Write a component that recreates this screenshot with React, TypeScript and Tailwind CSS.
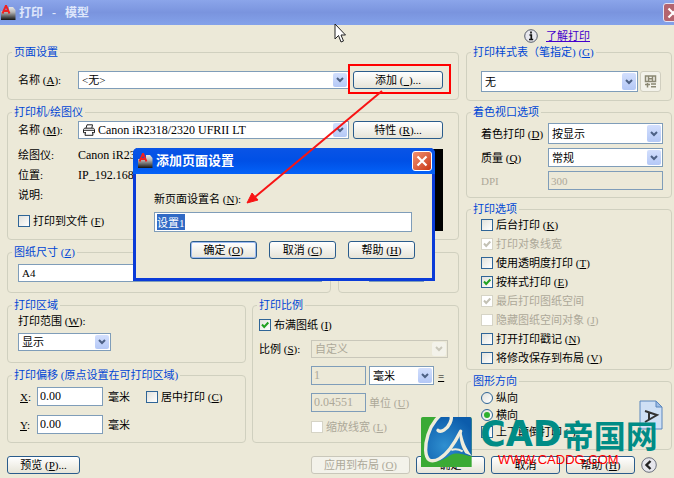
import React, { useEffect, useRef } from 'react';
import clsx from 'clsx';

type Children = { children?: React.ReactNode };

function Group({ title, className, bodyClassName, children }: Children & { title?: React.ReactNode; className?: string; bodyClassName?: string }) {
  return (
    <fieldset className={clsx('min-w-0 rounded-[4px] border border-[#d0d0bf]', className)}>
      <legend className="ml-1 h-3 px-0.5 text-[#0046d5] whitespace-nowrap">{title}</legend>
      <div className={bodyClassName}>{children}</div>
    </fieldset>
  );
}

function Select({ id, value, label, className, selectClassName, disabled, icon }: {
  id?: string;
  value: string;
  label?: string;
  className?: string;
  selectClassName?: string;
  disabled?: boolean;
  icon?: React.ReactNode;
}) {
  return (
    <div className={clsx('relative', className)}>
      <select
        id={id}
        aria-label={label}
        disabled={disabled}
        className={clsx(
          'block h-full w-full appearance-none border pr-5 outline-none',
          disabled ? 'border-[#c9c7ba] bg-[#ece9d8] text-[#aca899] opacity-100' : 'border-[#7f9db9] bg-white text-black',
          selectClassName ?? 'pl-[3px]'
        )}
      >
        <option>{value}</option>
      </select>
      {icon}
      <span
        className={clsx(
          'pointer-events-none absolute inset-y-0.5 right-0.5 flex w-3.5 items-center justify-center rounded-[2px]',
          disabled ? 'bg-[#f3f2ea]' : 'bg-gradient-to-b from-[#d3dffd] to-[#b4c8f6]'
        )}
      >
        <svg width="8" height="6" viewBox="0 0 8 6" fill="none">
          <path d="M1 1l3 3 3-3" stroke={disabled ? '#c9c7ba' : '#4d6185'} strokeWidth="2" />
        </svg>
      </span>
    </div>
  );
}

function Button({ children, className, disabled, isDefault }: Children & { className?: string; disabled?: boolean; isDefault?: boolean }) {
  return (
    <button
      type="button"
      disabled={disabled}
      className={clsx(
        'h-[18px] shrink-0 rounded-[3px] border text-center whitespace-nowrap',
        disabled ? 'border-[#c9c7ba] bg-[#f3f2ea] text-[#aca899]' : 'border-[#2a5c8c] bg-gradient-to-b from-white to-[#e6e4d8] text-black',
        isDefault && 'shadow-[inset_0_0_0_1px_#9ebbf0]',
        className
      )}
    >
      {children}
    </button>
  );
}

function Check({ children, checked, disabled, className }: Children & { checked?: boolean; disabled?: boolean; className?: string }) {
  return (
    <label className={clsx('flex items-center gap-[3px] whitespace-nowrap', disabled ? 'text-[#aca899]' : 'text-black', className)}>
      <span className="relative block h-3 w-3 shrink-0">
        <input
          type="checkbox"
          defaultChecked={checked}
          disabled={disabled}
          className={clsx(
            'peer block h-3 w-3 appearance-none border',
            disabled ? 'border-[#d6d4c6] bg-white' : 'border-[#2f6597] bg-gradient-to-br from-[#e2e2dc] to-white'
          )}
        />
        <svg className="pointer-events-none absolute inset-0 hidden peer-checked:block" width="12" height="12" viewBox="0 0 12 12" fill="none">
          <path d="M3 5.5l2.2 2.5L9.3 3.5" stroke={disabled ? '#c3c1b4' : '#21a121'} strokeWidth="2" />
        </svg>
      </span>
      <span>{children}</span>
    </label>
  );
}

function Radio({ children, checked }: Children & { checked?: boolean }) {
  return (
    <label className="flex h-[17px] items-center gap-[3px]">
      <span className="relative block h-3 w-3 shrink-0">
        <input
          type="radio"
          name="orientation"
          defaultChecked={checked}
          className="peer block h-3 w-3 appearance-none rounded-full border border-[#2f6597] bg-gradient-to-br from-[#e2e2dc] to-white"
        />
        <span className="pointer-events-none absolute inset-[3px] hidden rounded-full bg-[#2fb02f] peer-checked:block" />
      </span>
      {children}
    </label>
  );
}

function AppIcon() {
  return (
    <svg width="16" height="16" viewBox="0 0 16 16" className="shrink-0">
      <defs>
        <linearGradient id="plate" x1="0" y1="0" x2="0" y2="1">
          <stop offset="0" stopColor="#e6e6e6" />
          <stop offset="0.4" stopColor="#b4b4b4" />
          <stop offset="1" stopColor="#141414" />
        </linearGradient>
      </defs>
      <path d="M1 6h8V2h4l2.500 3v10H1z" fill="url(#plate)" />
      <path d="M2.500 8.500L6 .5l3.500 8M4 6h4" stroke="#f02020" strokeWidth="1.900" fill="none" />
    </svg>
  );
}

function CloseIcon() {
  return (
    <svg width="12" height="12" viewBox="0 0 12 12" className="shrink-0">
      <path d="M1.5 1.5l9 9M10.5 1.5l-9 9" stroke="#fff" strokeWidth="2.2" />
    </svg>
  );
}

function PrinterIcon() {
  return (
    <svg width="12" height="12" viewBox="0 0 12 12" fill="#fff" stroke="#222" className="pointer-events-none absolute top-[3px] left-[5px]">
      <path d="M3 4.200L4 .8h5.500L8.800 4.200" />
      <path d="M1.500 4.200h9l1 1.300v3.200H.5V5.500z" />
      <path d="M2.500 8l-.5 3.300h8L9.500 8M.5 6.300h11" />
    </svg>
  );
}

function AddPageSetupDialog() {
  const nameRef = useRef<HTMLInputElement>(null);

  useEffect(() => {
    nameRef.current?.focus();
    nameRef.current?.select();
  }, []);

  return (
    <div role="dialog" aria-label="添加页面设置" className="absolute top-[148px] left-[133px] z-10 w-[302px] rounded-t-[5px] border-x-[3px] border-b-[3px] border-[#0a3bd8] bg-[#ece9d8]">
      <div className="-mx-[3px] flex h-[26px] items-center gap-[3px] rounded-t-[5px] bg-gradient-to-b from-[#0a54e6] via-[#0050e6] to-[#0462f8] pr-[3px] pl-1">
        <AppIcon />
        <h2 className="flex-1 text-[13px] font-bold text-white">添加页面设置</h2>
        <button type="button" aria-label="关闭" className="flex h-5 w-5 items-center justify-center rounded-[3px] border border-white bg-gradient-to-br from-[#f09070] to-[#c8340c]">
          <CloseIcon />
        </button>
      </div>
      <div className="pt-[19px] pr-[17px] pb-[19px] pl-[18px]">
        <label htmlFor="setup-name" className="block">新页面设置名 (<u>N</u>):</label>
        <div className="mt-[7px] pr-[3px]">
          <input
            id="setup-name"
            ref={nameRef}
            defaultValue="设置1"
            className="block h-5 w-full border border-[#7f9db9] bg-white px-0.5 outline-none selection:bg-[#316ac5] selection:text-white"
          />
        </div>
        <div className="mt-[9px] flex justify-end gap-3">
          <Button className="w-[67px]" isDefault>确定 (<u>O</u>)</Button>
          <Button className="w-[67px]">取消 (<u>C</u>)</Button>
          <Button className="w-[67px]">帮助 (<u>H</u>)</Button>
        </div>
      </div>
    </div>
  );
}

function Watermark() {
  return (
    <div className="pointer-events-none absolute top-[406px] left-[416px] z-10 flex">
      <svg width="64" height="66" viewBox="0 0 192 198" fill="none">
        <defs>
          <radialGradient id="globe" cx="0.4" cy="0.65" r="0.7">
            <stop offset="0" stopColor="#2f8fd0" />
            <stop offset="1" stopColor="#0c5cab" />
          </radialGradient>
        </defs>
        <path d="M15 38q0-5 5-5h142q5 0 5 5v145H15z" fill="#3aaa35" />
        <path d="M62 33h98q7 0 7 7v110c-14 0-42-14-62-4-20 14-44 26-62 16C22 130 32 70 62 33z" fill="url(#globe)" />
        {/* C */}
        <path
          d="M66 73c10 8 28-4 36-22 8-18 4-32-10-31-22 2-46 34-56 66-10 32-10 66 4 76 18 8 42-8 62-34 14-18 24-36 32-52"
          stroke="#efecdb"
          strokeWidth="10"
          strokeLinecap="round"
          strokeLinejoin="round"
        />
        {/* A */}
        <path d="M130 78l6-4c4 28 14 54 32 76l-20-8c-12-18-18-38-18-64z" fill="#efecdb" />
        <path d="M106 132c10-4 22-3 34 4" stroke="#efecdb" strokeWidth="6" />
      </svg>
      <div className="pt-2.5 whitespace-nowrap">
        <div className="flex h-9 items-center font-bold text-[#008c86]">
          <span className="font-['DejaVu_Sans'] text-[35px] leading-9">CAD</span>
          <span className="font-['Noto_Sans_CJK_SC'] text-[32px] leading-9">帝国网</span>
        </div>
        <div className="pl-[18px] font-['Liberation_Sans'] text-[13px] leading-4 text-[#ff0000]">WWW.CADDG.COM</div>
      </div>
    </div>
  );
}

export default function App() {
  return (
    <div className="relative min-h-screen overflow-hidden bg-[#ece9d8] font-['Liberation_Serif','Noto_Sans_CJK_SC',sans-serif] text-[11px] leading-3 text-black">
      {/* Title bar */}
      <header className="flex h-[25px] items-center gap-[3px] bg-gradient-to-b from-[#8ba5ea] via-[#7a94de] to-[#84a2ea]">
        <AppIcon />
        <h1 className="flex-1 text-[12px] font-bold whitespace-pre text-[#dfe7fb]">{'打印   -   模型'}</h1>
        <button type="button" aria-label="关闭" className="-mr-2 flex h-[19px] w-[19px] shrink-0 items-center justify-center rounded-[3px] border border-[#e4e4f4] bg-[#b4646e]">
          <CloseIcon />
        </button>
      </header>

      <main className="flex gap-[7px] pr-0.5 pl-[7px]">
        {/* Left side */}
        <div className="flex min-w-0 flex-1 flex-col gap-1.5 pt-[21px]">
          <Group title="页面设置" bodyClassName="flex items-center pt-[13px] pr-[15px] pb-2.5 pl-2.5">
            <label htmlFor="setup" className="w-[60px] shrink-0">名称 (<u>A</u>):</label>
            <Select id="setup" value="<无>" className="mr-1 h-[18px] flex-1" />
            <div className="relative z-10">
              <Button className="w-[90px]">添加 (<u>&nbsp;&nbsp;</u>)...</Button>
              <span className="pointer-events-none absolute -top-[7px] -right-2 -bottom-[5px] -left-[5px] border-2 border-[#f00]" />
            </div>
          </Group>

          <Group title="打印机/绘图仪" bodyClassName="pt-[3px] pr-[15px] pb-2 pl-2.5">
            <div className="flex items-center">
              <label htmlFor="printer" className="w-[60px] shrink-0">名称 (<u>M</u>):</label>
              <Select
                id="printer"
                value="Canon iR2318/2320 UFRII LT"
                className="mr-1 h-[18px] flex-1"
                selectClassName="pl-[19px] text-[12px]"
                icon={<PrinterIcon />}
              />
              <Button className="w-[90px]">特性 (<u>R</u>)...</Button>
            </div>
            <div className="flex justify-between pt-1.5">
              <div>
                <dl className="grid grid-cols-[60px_auto] leading-5">
                  <dt>绘图仪:</dt>
                  <dd className="text-[12px]">Canon iR23</dd>
                  <dt>位置:</dt>
                  <dd className="text-[12px]">IP_192.168</dd>
                  <dt>说明:</dt>
                  <dd />
                </dl>
                <Check className="mt-2.5 h-3">打印到文件 (<u>F</u>)</Check>
              </div>
              <div className="mt-1 h-[82px] w-[90px] bg-black" />
            </div>
          </Group>

          <div className="flex gap-[7px]">
            <Group title={<>图纸尺寸 (<u>Z</u>)</>} className="flex-1" bodyClassName="pt-1.5 pr-2 pb-2.5 pl-2.5">
              <Select label="图纸尺寸" value="A4" className="h-[18px]" />
            </Group>
            <Group className="w-[121px]" bodyClassName="pt-1.5 pb-2.5 pl-[30px]">
              <input aria-label="份数" className="block h-[18px] w-[55px] border border-[#7f9db9] bg-white px-[3px]" />
            </Group>
          </div>

          <div className="flex gap-1.5">
            <div className="flex w-[239px] shrink-0 flex-col gap-1.5">
              <Group title="打印区域" bodyClassName="pb-[11px] pl-2.5">
                <label htmlFor="range" className="block leading-5">打印范围 (<u>W</u>):</label>
                <Select id="range" value="显示" className="mt-0.5 h-[18px] w-[93px]" />
              </Group>
              <Group title="打印偏移 (原点设置在可打印区域)" bodyClassName="flex gap-6 pt-1.5 pb-2 pl-3">
                <div className="flex flex-col gap-[9px]">
                  <label className="flex h-[19px] items-center">
                    <span className="w-[17px]"><u>X</u>:</span>
                    <input defaultValue="0.00" className="mr-[5px] h-full w-[66px] border border-[#7f9db9] bg-white px-0.5 text-[12px]" />
                    毫米
                  </label>
                  <label className="flex h-[19px] items-center">
                    <span className="w-[17px]"><u>Y</u>:</span>
                    <input defaultValue="0.00" className="mr-[5px] h-full w-[66px] border border-[#7f9db9] bg-white px-0.5 text-[12px]" />
                    毫米
                  </label>
                </div>
                <Check className="-ml-2 h-[19px]">居中打印 (<u>C</u>)</Check>
              </Group>
            </div>

            <Group title="打印比例" className="flex-1" bodyClassName="flex flex-col gap-2 pt-[7px] pr-2.5 pb-[9px] pl-1.5">
              <Check checked className="h-3.5">布满图纸 (<u>I</u>)</Check>
              <div className="flex items-center">
                <label htmlFor="scale" className="w-[52px] shrink-0">比例 (<u>S</u>):</label>
                <Select id="scale" value="自定义" disabled className="h-[18px] flex-1" />
              </div>
              <div className="flex items-center gap-[3px] pl-[52px]">
                <input aria-label="比例值" disabled defaultValue="1" className="h-[19px] w-[55px] border border-[#7f9db9] px-0.5 text-[12px] text-[#aca899]" />
                <Select label="比例单位" value="毫米" className="h-[19px] w-[65px]" />
                <u className="ml-px">=</u>
              </div>
              <label className="flex items-center gap-[3px] pl-[52px] text-[#aca899]">
                <input disabled defaultValue="0.04551" className="h-[19px] w-[55px] border border-[#7f9db9] px-0.5 text-[12px]" />
                <span>单位 (<u>U</u>)</span>
              </label>
              <Check disabled className="h-[13px] pl-[52px]">缩放线宽 (<u>L</u>)</Check>
            </Group>
          </div>
        </div>

        {/* Right side */}
        <div className="flex w-[206px] shrink-0 flex-col gap-[5px]">
          <div className="-mb-[5px] flex h-[21px] items-center gap-2 pl-[58px]">
            <svg width="14" height="14" viewBox="0 0 14 14">
              <circle cx="7" cy="7" r="6.300" fill="#e8e8ee" stroke="#555b68" />
              <path d="M7 2.500v2M5.500 6h1.800v4M5 10.500h4.200" stroke="#111" strokeWidth="1.700" fill="none" />
            </svg>
            <a href="#learn" className="text-[#4400cc] underline">了解打印</a>
          </div>

          <Group title={<>打印样式表（笔指定) (<u>G</u>)</>} bodyClassName="flex items-center gap-0.5 pt-[13px] pb-2 pl-3.5">
            <Select label="打印样式表" value="无" className="h-[21px] w-[157px]" />
            <button type="button" aria-label="编辑" className="flex h-[21px] w-[21px] items-center justify-center rounded-[3px] border border-[#d0cebf] bg-[#f3f2ea]">
              <svg width="13" height="13" viewBox="0 0 13 13" fill="none" stroke="#8b8873" strokeWidth="1.500">
                <path d="M1.500 1h10v5.500h-10zM4.500 1v5.500M8.500 1v5.500M4.500 3.800h4M1 9.500h5M3.500 8v4.500M7 9h5M7 11.800h5" />
              </svg>
            </button>
          </Group>

          <Group title="着色视口选项" bodyClassName="grid grid-cols-[67px_1fr] items-center gap-y-1 pt-[5px] pr-2 pb-[7px] pl-3.5">
            <label htmlFor="shade">着色打印 (<u>D</u>)</label>
            <Select id="shade" value="按显示" className="h-[21px]" />
            <label htmlFor="quality">质量 (<u>Q</u>)</label>
            <Select id="quality" value="常规" className="h-[19px]" />
            <label htmlFor="dpi" className="text-[#aca899]">DPI</label>
            <input id="dpi" disabled defaultValue="300" className="h-[19px] w-full border border-[#7f9db9] px-0.5 text-[#aca899]" />
          </Group>

          <Group title="打印选项" bodyClassName="pb-0.5 pl-3.5">
            <Check className="h-[19px]">后台打印 (<u>K</u>)</Check>
            <Check className="h-[19px]" checked disabled>打印对象线宽</Check>
            <Check className="h-[19px]">使用透明度打印 (<u>T</u>)</Check>
            <Check className="h-[19px]" checked>按样式打印 (<u>E</u>)</Check>
            <Check className="h-[19px]" checked disabled>最后打印图纸空间</Check>
            <Check className="h-[19px]" disabled>隐藏图纸空间对象 (<u>J</u>)</Check>
            <Check className="h-[19px]">打开打印戳记 (<u>N</u>)</Check>
            <Check className="h-[19px]">将修改保存到布局 (<u>V</u>)</Check>
          </Group>

          <Group title="图形方向" bodyClassName="flex items-center justify-between pt-0.5 pr-2 pb-[9px] pl-3.5">
            <div>
              <Radio>纵向</Radio>
              <Radio checked>横向</Radio>
              <Check className="h-[17px]">上下颠倒打印 (<u>-</u>)</Check>
            </div>
            <svg width="24" height="30" viewBox="0 0 24 30">
              <path d="M1 1h16l6 6v22H1z" fill="#cfe0f5" stroke="#5a86bd" />
              <path d="M17 1v6h6z" fill="#9dbde6" stroke="#5a86bd" />
              <path d="M6 11l12 4-12 7M10 12.500v7" fill="none" stroke="#333" strokeWidth="2" />
            </svg>
          </Group>
        </div>
      </main>

      {/* Bottom buttons */}
      <footer className="flex items-center gap-1.5 pt-1.5 pr-[17px] pb-[5px] pl-[7px]">
        <Button className="mr-auto w-[73px]">预览 (<u>P</u>)...</Button>
        <Button className="w-[99px]" disabled>应用到布局 (<u>O</u>)</Button>
        <Button className="w-[69px]">确定</Button>
        <Button className="w-[69px]">取消</Button>
        <Button className="w-[69px]">帮助 (<u>H</u>)</Button>
        <button type="button" aria-label="收起" className="h-4 w-4 shrink-0">
          <svg width="16" height="16" viewBox="0 0 16 16" fill="none">
            <circle cx="8" cy="8" r="7.300" fill="#e6e6ec" stroke="#6a6f7c" />
            <path d="M9.500 4L5.500 8l4 4" stroke="#222" strokeWidth="2.400" />
          </svg>
        </button>
      </footer>

      <AddPageSetupDialog />

      {/* Arrow from the add button to the dialog */}
      <svg width="140" height="116" viewBox="0 0 140 116" className="pointer-events-none absolute top-[90px] left-[245px] z-20">
        <path d="M137 1L10 107" stroke="#f81414" strokeWidth="2" />
        <path d="M2 113l5-10 6 7z" fill="#f81414" stroke="#f81414" />
      </svg>

      {/* Mouse pointer */}
      <svg width="12" height="20" viewBox="0 0 12 20" className="pointer-events-none absolute top-[23px] left-[334px]">
        <path d="M1 1v15l3.500-3.500L7 19l2.500-1L7 12h4.500z" fill="#fff" stroke="#222" />
      </svg>

      <Watermark />
    </div>
  );
}
